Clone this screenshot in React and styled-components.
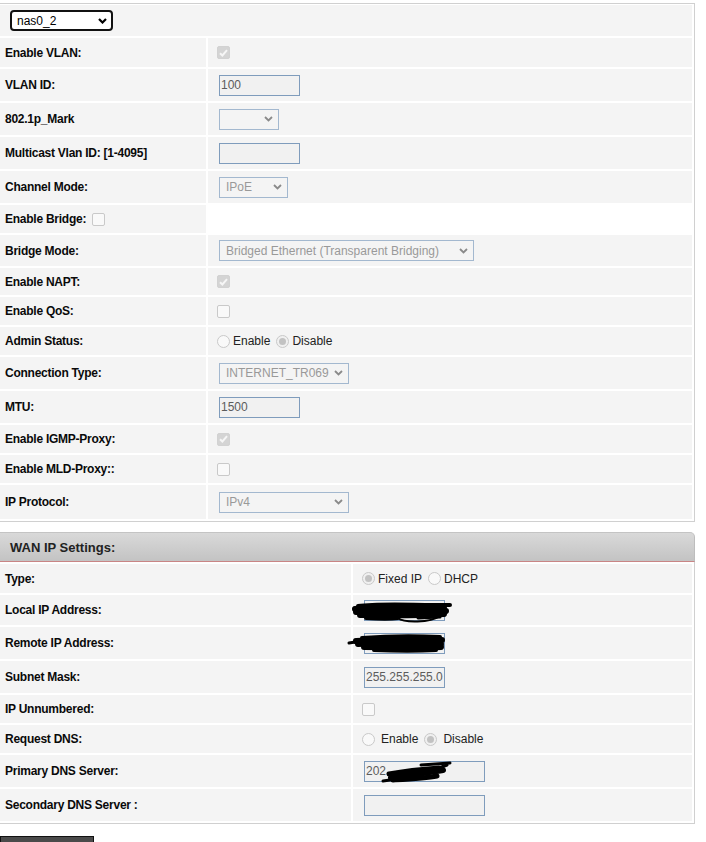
import React from "react";
import styled, { createGlobalStyle } from "styled-components";

const GlobalStyle = createGlobalStyle`
  html, body { margin: 0; padding: 0; background: #fff; overflow: hidden; }
  body {
    font-family: "Liberation Sans", Arial, Helvetica, sans-serif;
    font-size: 12px;
    color: #111;
  }
  * { box-sizing: border-box; }
`;

const Page = styled.div`
  width: 695px;
  padding-top: 3px;
`;

const FormGrid = styled.div`
  display: grid;
  grid-template-columns: ${(p) => p.$label}px 1fr;
  gap: 2px;
  padding: ${(p) => (p.$open ? "2px" : "1px")} 2px 2px 0;
  border: 1px solid #d0d0d0;
  border-left: none;
  ${(p) => p.$open && "border-top: none;"}
`;

const Cell = styled.div`
  display: flex;
  align-items: center;
  height: ${(p) => p.$h}px;
  background: ${(p) => (p.$blank ? "transparent" : "#f4f4f4")};
`;

const LabelCell = styled(Cell)`
  padding-left: 5px;
  gap: 6px;
  font-weight: bold;
  letter-spacing: -0.25px;
  color: #0a0a0a;
  white-space: nowrap;
`;

const ValueCell = styled(Cell)`
  padding-left: 9px;
`;

const WideCell = styled(Cell)`
  grid-column: 1 / -1;
  padding-left: 10px;
`;

const InterfaceSelect = styled.span`
  display: inline-flex;
  align-items: center;
  justify-content: space-between;
  width: 103px;
  height: 21px;
  padding: 0 4px 0 5px;
  border: 2px solid #111;
  border-radius: 4px;
  background: #fff;
  color: #000;
`;

const SelectBox = styled.span`
  display: inline-flex;
  align-items: center;
  justify-content: space-between;
  width: ${(p) => p.$w}px;
  height: 21px;
  margin-left: 2px;
  padding: 0 5px 0 6px;
  border: 1px solid #a3b8cf;
  background: #f4f4f4;
  color: #999;
  white-space: nowrap;
`;

const TextField = styled.input`
  width: ${(p) => p.$w || 81}px;
  height: 21px;
  margin: 0 0 0 2px;
  padding: 0 1px;
  border: 1px solid #7f9cbc;
  background: #f1f1f1;
  color: #5c5c5c;
  font: 12px "Liberation Sans", Arial, sans-serif;
  outline: none;
`;

const Redacted = styled.span`
  position: relative;
  display: inline-flex;
  svg {
    position: absolute;
    left: ${(p) => p.$x}px;
    top: ${(p) => p.$y}px;
    pointer-events: none;
    overflow: visible;
  }
`;

const Box = styled.span`
  display: inline-flex;
  align-items: center;
  justify-content: center;
  flex: none;
  width: 13px;
  height: 13px;
  border-radius: 2px;
  border: 1px solid ${(p) => (p.$checked ? "#d2d2d2" : "#c9c9c9")};
  background: ${(p) => (p.$checked ? "#d4d4d4" : "#f9f9f9")};
`;

const RadioDot = styled.span`
  display: inline-flex;
  align-items: center;
  justify-content: center;
  flex: none;
  width: 13px;
  height: 13px;
  border-radius: 50%;
  border: 1px solid #c9c9c9;
  background: ${(p) => (p.$on ? "#f0f0f0" : "#f9f9f9")};
  &::after {
    content: "";
    display: ${(p) => (p.$on ? "block" : "none")};
    width: 7px;
    height: 7px;
    border-radius: 50%;
    background: #c2c2c2;
  }
`;

const RadioGroup = styled.span`
  display: inline-flex;
  align-items: center;
  color: #222;
`;

const RadioText = styled.span`
  margin: 0 6px 0 ${(p) => p.$gap}px;
`;

const SectionHead = styled.div`
  display: flex;
  align-items: center;
  height: 30px;
  margin-top: 10px;
  padding-left: 10px;
  font-size: 13px;
  font-weight: bold;
  color: #222;
  background: linear-gradient(to bottom, #d9d9d9 0%, #cecece 50%, #c3c3c3 100%);
  border-top: 1px solid #c4c4c4;
  border-right: 1px solid #bdbdbd;
  border-bottom: 1px solid #c98585;
  border-top-right-radius: 5px;
`;

const ApplyButton = styled.button`
  display: block;
  width: 94px;
  height: 24px;
  margin-top: 12px;
  padding: 0;
  border: 1px solid #111;
  background: #4a4a4a;
`;

const Chevron = ({ color = "#8a8a8a", weight = 1.8 }) => (
  <svg width="9" height="6" viewBox="0 0 9 6">
    <path d="M1 1 L4.5 4.5 L8 1" fill="none" stroke={color} strokeWidth={weight} />
  </svg>
);

const Check = ({ checked }) => (
  <Box $checked={checked}>
    {checked && (
      <svg width="9" height="8" viewBox="0 0 9 8">
        <path d="M1 4.2 L3.4 6.5 L8 1.2" fill="none" stroke="#f6f6f6" strokeWidth="2" />
      </svg>
    )}
  </Box>
);

const Select = ({ w, children }) => (
  <SelectBox $w={w}>
    <span>{children}</span>
    <Chevron />
  </SelectBox>
);

const Radios = ({ options, selected, gap = 3 }) => (
  <RadioGroup>
    {options.map((o) => (
      <React.Fragment key={o}>
        <RadioDot $on={o === selected} />
        <RadioText $gap={gap}>{o}</RadioText>
      </React.Fragment>
    ))}
  </RadioGroup>
);

const Row = ({ label, h, blank, extra, children }) => (
  <>
    <LabelCell $h={h}>
      {label}
      {extra}
    </LabelCell>
    <ValueCell $h={h} $blank={blank}>
      {children}
    </ValueCell>
  </>
);

// heavy marker strokes blacking out the address values
const Ink = ({ strokes, w, h }) => (
  <svg width={w} height={h} viewBox={`0 0 ${w} ${h}`}>
    {strokes.map(([d, sw], i) => (
      <path key={i} d={d} fill="none" stroke="#000" strokeWidth={sw} strokeLinecap="round" />
    ))}
  </svg>
);

const localInk = [
  ["M10 5 C 30 2, 60 4, 102 4", 4],
  ["M7 8 C 30 6, 60 8, 96 7", 6],
  ["M8 11 C 35 10, 65 12, 98 10", 6],
  ["M12 14 C 35 14, 60 15, 96 13", 6],
  ["M18 17 C 35 18, 42 18, 50 17", 4],
  ["M50 17 C 56 22, 82 22, 92 15", 2],
  ["M70 17 L 92 16", 3],
];

const remoteInk = [
  ["M1 11 L 20 8", 3],
  ["M14 6 C 40 4, 70 4, 92 5", 4],
  ["M8 9 C 30 8, 60 8, 94 8", 6],
  ["M10 12 C 40 11, 70 12, 93 12", 6],
  ["M16 15 C 40 15, 70 16, 93 15", 6],
  ["M26 18 C 50 19, 70 19, 88 18", 4],
];

const dnsInk = [
  ["M2 19 C 20 17, 40 14, 66 3", 3],
  ["M10 16 C 25 13, 45 11, 62 8", 6],
  ["M8 12 C 25 9, 45 7, 58 6", 5],
  ["M12 18 C 28 17, 45 16, 56 14", 5],
  ["M40 3 L 69 1", 3],
];

export default function App() {
  return (
    <Page>
      <GlobalStyle />
      <FormGrid $label={206}>
        <WideCell $h={31}>
          <InterfaceSelect>
            <span>nas0_2</span>
            <Chevron color="#000" weight={2.2} />
          </InterfaceSelect>
        </WideCell>
        <Row label="Enable VLAN:" h={29}>
          <Check checked />
        </Row>
        <Row label="VLAN ID:" h={32}>
          <TextField readOnly value="100" />
        </Row>
        <Row label="802.1p_Mark" h={32}>
          <Select w={60}> </Select>
        </Row>
        <Row label="Multicast Vlan ID: [1-4095]" h={32}>
          <TextField readOnly value="" />
        </Row>
        <Row label="Channel Mode:" h={32}>
          <Select w={69}>IPoE</Select>
        </Row>
        <Row label="Enable Bridge:" h={28} blank extra={<Check />} />
        <Row label="Bridge Mode:" h={31}>
          <Select w={255}>Bridged Ethernet (Transparent Bridging)</Select>
        </Row>
        <Row label="Enable NAPT:" h={27}>
          <Check checked />
        </Row>
        <Row label="Enable QoS:" h={28}>
          <Check />
        </Row>
        <Row label="Admin Status:" h={28}>
          <Radios options={["Enable", "Disable"]} selected="Disable" />
        </Row>
        <Row label="Connection Type:" h={32}>
          <Select w={130}>INTERNET_TR069</Select>
        </Row>
        <Row label="MTU:" h={32}>
          <TextField readOnly value="1500" />
        </Row>
        <Row label="Enable IGMP-Proxy:" h={28}>
          <Check checked />
        </Row>
        <Row label="Enable MLD-Proxy::" h={28}>
          <Check />
        </Row>
        <Row label="IP Protocol:" h={34}>
          <Select w={130}>IPv4</Select>
        </Row>
      </FormGrid>

      <SectionHead>WAN IP Settings:</SectionHead>
      <FormGrid $label={351} $open>
        <Row label="Type:" h={29}>
          <Radios options={["Fixed IP", "DHCP"]} selected="Fixed IP" />
        </Row>
        <Row label="Local IP Address:" h={30}>
          <Redacted $x={-14} $y={1}>
            <TextField readOnly value="" />
            <Ink strokes={localInk} w={110} h={24} />
          </Redacted>
        </Row>
        <Row label="Remote IP Address:" h={32}>
          <Redacted $x={-14} $y={-1}>
            <TextField readOnly value="" />
            <Ink strokes={remoteInk} w={110} h={24} />
          </Redacted>
        </Row>
        <Row label="Subnet Mask:" h={32}>
          <TextField readOnly value="255.255.255.0" />
        </Row>
        <Row label="IP Unnumbered:" h={28}>
          <Check />
        </Row>
        <Row label="Request DNS:" h={28}>
          <Radios options={["Enable", "Disable"]} selected="Disable" gap={6} />
        </Row>
        <Row label="Primary DNS Server:" h={32}>
          <Redacted $x={19} $y={1}>
            <TextField readOnly value="202" $w={121} />
            <Ink strokes={dnsInk} w={70} h={22} />
          </Redacted>
        </Row>
        <Row label="Secondary DNS Server :" h={32}>
          <TextField readOnly value="" $w={121} />
        </Row>
      </FormGrid>
      <ApplyButton type="button" aria-label="Apply Changes" />
    </Page>
  );
}
